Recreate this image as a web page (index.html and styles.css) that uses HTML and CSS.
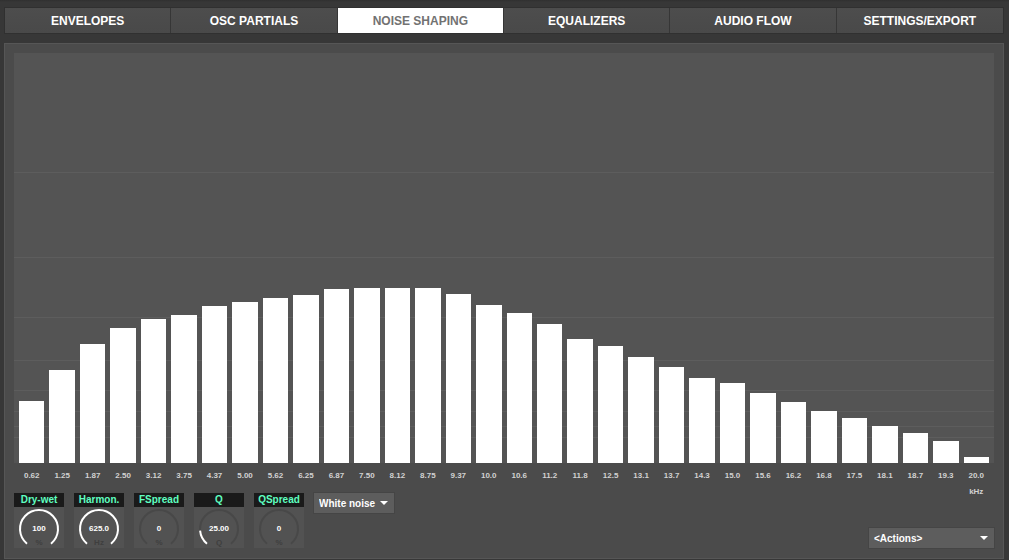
FILE: index.html
```html
<!DOCTYPE html>
<html lang="en">
<head>
<meta charset="utf-8">
<title>Noise shaping</title>
<link rel="stylesheet" href="styles.css">
</head>
<body>
<nav class="tabs">
  <button class="tab" type="button">ENVELOPES</button>
  <button class="tab" type="button">OSC PARTIALS</button>
  <button class="tab active" type="button">NOISE SHAPING</button>
  <button class="tab" type="button">EQUALIZERS</button>
  <button class="tab" type="button">AUDIO FLOW</button>
  <button class="tab" type="button">SETTINGS/EXPORT</button>
</nav>
<main class="panel">
  <div class="plot">
    <svg class="gridlines" viewBox="0 0 100 410" preserveAspectRatio="none" aria-hidden="true">
      <path d="M0 119h100v1H0zM0 204h100v1H0zM0 264h100v1H0zM0 307h100v1H0zM0 337h100v1H0zM0 358h100v1H0zM0 373h100v1H0zM0 384h100v1H0z"/>
    </svg>
    <div class="bars">
      <div class="bar" style="--v:62"></div><div class="bar" style="--v:93"></div>
      <div class="bar" style="--v:119"></div><div class="bar" style="--v:135"></div>
      <div class="bar" style="--v:144"></div><div class="bar" style="--v:148"></div>
      <div class="bar" style="--v:157"></div><div class="bar" style="--v:161"></div>
      <div class="bar" style="--v:165"></div><div class="bar" style="--v:168"></div>
      <div class="bar" style="--v:174"></div><div class="bar" style="--v:175"></div>
      <div class="bar" style="--v:175"></div><div class="bar" style="--v:175"></div>
      <div class="bar" style="--v:169"></div><div class="bar" style="--v:158"></div>
      <div class="bar" style="--v:150"></div><div class="bar" style="--v:139"></div>
      <div class="bar" style="--v:124"></div><div class="bar" style="--v:117"></div>
      <div class="bar" style="--v:106"></div><div class="bar" style="--v:96"></div>
      <div class="bar" style="--v:85"></div><div class="bar" style="--v:80"></div>
      <div class="bar" style="--v:70"></div><div class="bar" style="--v:61"></div>
      <div class="bar" style="--v:52"></div><div class="bar" style="--v:45"></div>
      <div class="bar" style="--v:37"></div><div class="bar" style="--v:30"></div>
      <div class="bar" style="--v:22"></div><div class="bar" style="--v:6"></div>
    </div>
  </div>
  <div class="axis">
    <span>0.62</span><span>1.25</span><span>1.87</span><span>2.50</span><span>3.12</span><span>3.75</span><span>4.37</span><span>5.00</span><span>5.62</span><span>6.25</span><span>6.87</span><span>7.50</span><span>8.12</span><span>8.75</span><span>9.37</span><span>10.0</span><span>10.6</span><span>11.2</span><span>11.8</span><span>12.5</span><span>13.1</span><span>13.7</span><span>14.3</span><span>15.0</span><span>15.6</span><span>16.2</span><span>16.8</span><span>17.5</span><span>18.1</span><span>18.7</span><span>19.3</span><span>20.0<br>kHz</span>
  </div>
  <div class="controls">
    <div class="knobs">
      <div class="knob">
        <label class="knob-name" for="drywet">Dry-wet</label>
        <div class="dial">
          <svg class="arc" viewBox="0 0 50 41" aria-hidden="true"><path class="on" d="M13 36.7A19 19 0 1 1 37 36.7"/></svg>
          <input class="value" id="drywet" type="text" value="100"><span class="unit">%</span>
        </div>
      </div>
      <div class="knob">
        <label class="knob-name" for="harmon">Harmon.</label>
        <div class="dial">
          <svg class="arc" viewBox="0 0 50 41" aria-hidden="true"><path class="on" d="M13 36.7A19 19 0 1 1 37 36.7"/></svg>
          <input class="value" id="harmon" type="text" value="625.0"><span class="unit">Hz</span>
        </div>
      </div>
      <div class="knob">
        <label class="knob-name" for="fspread">FSpread</label>
        <div class="dial">
          <svg class="arc" viewBox="0 0 50 41" aria-hidden="true"><path d="M13 36.7A19 19 0 1 1 37 36.7"/></svg>
          <input class="value" id="fspread" type="text" value="0"><span class="unit">%</span>
        </div>
      </div>
      <div class="knob">
        <label class="knob-name" for="q">Q</label>
        <div class="dial">
          <svg class="arc" viewBox="0 0 50 41" aria-hidden="true"><path d="M13 36.7A19 19 0 1 1 37 36.7"/><path class="on" d="M13 36.7A19 19 0 0 1 6.1 23.6"/></svg>
          <input class="value" id="q" type="text" value="25.00"><span class="unit">Q</span>
        </div>
      </div>
      <div class="knob">
        <label class="knob-name" for="qspread">QSpread</label>
        <div class="dial">
          <svg class="arc" viewBox="0 0 50 41" aria-hidden="true"><path d="M13 36.7A19 19 0 1 1 37 36.7"/></svg>
          <input class="value" id="qspread" type="text" value="0"><span class="unit">%</span>
        </div>
      </div>
    </div>
    <div class="menu noise">
      <select aria-label="Noise type"><option>White noise</option></select>
      <svg class="caret" viewBox="0 0 8 4" aria-hidden="true"><path d="M0 0h8L4 4z"/></svg>
    </div>
    <div class="menu actions">
      <select aria-label="Actions"><option>&lt;Actions&gt;</option></select>
      <svg class="caret" viewBox="0 0 8 4" aria-hidden="true"><path d="M0 0h8L4 4z"/></svg>
    </div>
  </div>
</main>
</body>
</html>
```
FILE: styles.css
```css
* { box-sizing: border-box; }

body {
  margin: 0;
  height: 100vh;
  min-height: 360px;
  padding: 7px 5px 1px 4px;
  display: flex;
  flex-direction: column;
  gap: 9px;
  background: linear-gradient(#303030 0, #373737 2px);
  color: #fff;
  font-family: "Liberation Sans", Arial, sans-serif;
  font-weight: bold;
}

button, input, select { font: inherit; color: inherit; }

.tabs {
  display: grid;
  grid-template-columns: repeat(6, 1fr);
  border: 1px solid #303030;
}
.tab {
  height: 25px;
  padding: 0;
  border: 0;
  border-right: 1px solid #363636;
  border-radius: 0;
  background: linear-gradient(#4d4d4d, #494949);
  font-size: 12px;
}
.tab.active { background: #fff; color: #727272; }
.tab:last-child { border-right: 0; }

.panel {
  flex: 1;
  display: flex;
  flex-direction: column;
  padding: 9px;
  border: 1px solid #565656;
  background: #4b4b4b;
}

.plot {
  position: relative;
  flex: 1;
  min-height: 200px;
  display: grid;
  grid-template: minmax(0, 1fr) / 100%;
  background: #545454;
}
.gridlines {
  position: absolute;
  inset: 0;
  width: 100%;
  height: 100%;
  fill: #5d5d5d;
}
.bars {
  display: flex;
  align-items: flex-end;
  gap: 5px;
  padding: 0 5px;
  z-index: 1;
}
.bar { flex: 1; height: calc(var(--v) / 410 * 100%); background: #fff; }

.axis {
  display: flex;
  gap: 5px;
  margin-top: 5px;
  padding: 0 5px;
  font-size: 8px;
  line-height: 16px;
  text-align: center;
  color: #d2d2d2;
}
.axis span { flex: 1 1 0; min-width: 0; }

.controls { display: flex; min-height: 57px; margin: -8px -1px 0 0; }
.knobs { display: flex; gap: 10px; align-self: flex-end; padding-bottom: 1px; }
.knob { width: 50px; }
.knob-name {
  display: block;
  background: #1a1a1a;
  color: #5fffc0;
  font-size: 10px;
  line-height: 14px;
  text-align: center;
}
.dial {
  display: grid;
  grid-template-rows: 15px 12px 14px;
  justify-items: center;
  background: #525252;
  font-size: 8px;
}
.arc {
  grid-area: 1 / 1 / 4 / 2;
  width: 50px;
  height: 41px;
  fill: none;
  stroke: #484848;
  stroke-width: 2;
}
.arc .on { stroke: #fff; }
.value {
  grid-area: 2 / 1;
  width: 30px;
  padding: 0;
  border: 0;
  background: transparent;
  text-align: center;
}
.unit { grid-area: 3 / 1; color: #3f3f3f; line-height: 18px; }

.menu { position: relative; height: 22px; }
.menu select {
  appearance: none;
  width: 100%;
  height: 100%;
  padding: 0 5px;
  border: 1px solid #454545;
  border-radius: 0;
  background: #5d5d5d;
  font-size: 10px;
}
.noise { width: 82px; margin-left: 9px; }
.actions { width: 127px; margin-left: auto; align-self: flex-end; }
.caret {
  position: absolute;
  top: 9px;
  right: 7px;
  width: 8px;
  height: 4px;
  fill: #fff;
  pointer-events: none;
}
```
